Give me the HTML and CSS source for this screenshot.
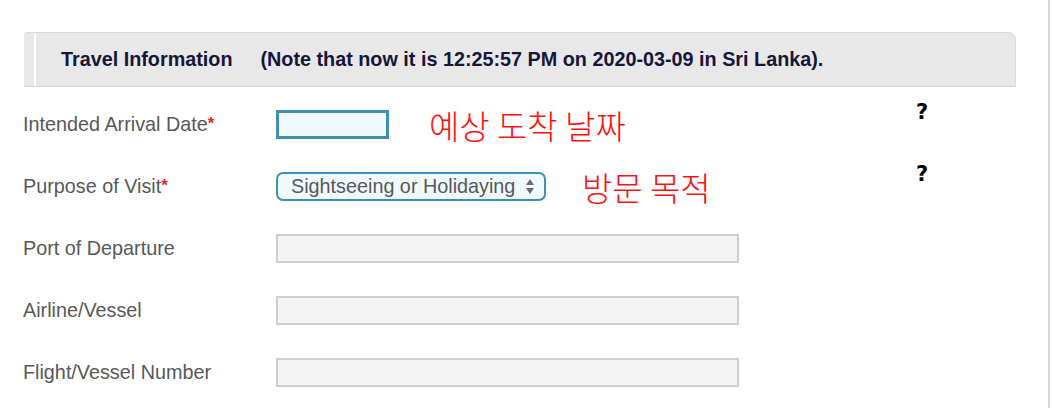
FILE: index.html
```html
<!DOCTYPE html>
<html lang="en">
<head>
    <meta charset="UTF-8">
    <meta name="viewport" content="width=device-width, initial-scale=1.0">
    <title>Travel Information</title>
    <link rel="stylesheet" href="styles.css">
</head>
<body>

<div class="page">
    <div class="section-head">
        <div class="section-title">
            <span>Travel Information</span>
            <span class="note">(Note that now it is 12:25:57 PM on 2020-03-09 in Sri Lanka).</span>
        </div>
    </div>

    <div class="row">
        <label for="arrival">Intended Arrival Date<span class="req">*</span></label>
        <div class="field">
            <input type="text" id="arrival" class="date-input">
            <span class="hint">예상 도착 날짜</span>
        </div>
        <span class="help">?</span>
    </div>

    <div class="row">
        <label for="purpose">Purpose of Visit<span class="req">*</span></label>
        <div class="field">
            <div class="select-wrap">
                <select id="purpose">
                    <option>Sightseeing or Holidaying</option>
                </select>
                <svg class="arrows" width="8" height="15" viewBox="0 0 8 15">
                    <path d="M4 0 L8 6 L0 6 Z" fill="#6b6b6b"/>
                    <path d="M0 9 L8 9 L4 15 Z" fill="#6b6b6b"/>
                </svg>
            </div>
            <span class="hint hint-2">방문 목적</span>
        </div>
        <span class="help">?</span>
    </div>

    <div class="row">
        <label for="port">Port of Departure</label>
        <div class="field">
            <input type="text" id="port" class="plain-input">
        </div>
    </div>

    <div class="row">
        <label for="airline">Airline/Vessel</label>
        <div class="field">
            <input type="text" id="airline" class="plain-input">
        </div>
    </div>

    <div class="row">
        <label for="flight">Flight/Vessel Number</label>
        <div class="field">
            <input type="text" id="flight" class="plain-input">
        </div>
    </div>
</div>

</body>
</html>
```

FILE: styles.css
```css
body {
    margin: 0;
    background-color: #fff;
    font-family: Arial, "Liberation Sans", sans-serif;
}

.page {
    width: 1050px;
    height: 408px;
    border-right: 2px solid #d6d6d6;
    padding-top: 32px;
    box-sizing: border-box;
    overflow: hidden;
}

.section-head {
    margin-left: 24px;
    width: 992px;
    box-sizing: border-box;
    padding-left: 10px;
    background-color: #e8e8e8;
    border-top: 1px solid #dadada;
    border-bottom: 1px solid #d2d2d2;
    border-right: 1px solid #dcdcdc;
    border-radius: 3px 7px 0 0;
}

.section-title {
    border-left: 2px solid #fff;
    height: 53px;
    display: flex;
    align-items: center;
    padding-left: 25px;
    font-size: 19.8px;
    font-weight: bold;
    color: #161638;
}

.note {
    margin-left: 28px;
}

.row {
    display: grid;
    grid-template-columns: 253px 640px auto;
    height: 62px;
    align-items: center;
    padding-left: 23px;
}

.section-head + .row {
    margin-top: 6px;
}

label {
    font-size: 19.8px;
    color: #585858;
    padding-top: 1px;
}

.req {
    color: #e8261e;
    font-weight: bold;
    font-size: 17px;
    vertical-align: 2px;
}

.field {
    display: flex;
    align-items: center;
}

.date-input {
    width: 113px;
    height: 29px;
    box-sizing: border-box;
    border: 3px solid #3d8fb3;
    background-color: #f0f9fe;
    margin: 0;
}

.select-wrap {
    position: relative;
}

select {
    appearance: none;
    -webkit-appearance: none;
    width: 270px;
    height: 29px;
    box-sizing: border-box;
    border: 2px solid #3d8fb3;
    border-radius: 7px;
    background-color: #f0f9fe;
    padding-left: 13px;
    font-family: Arial, "Liberation Sans", sans-serif;
    font-size: 19.8px;
    color: #585858;
    margin: 0;
}

.arrows {
    position: absolute;
    left: 250px;
    top: 7px;
    pointer-events: none;
}

.hint {
    margin-left: 40px;
    font-family: "Noto Sans CJK KR", sans-serif;
    font-weight: 300;
    font-size: 33px;
    color: #ff1010;
    line-height: 1;
    margin-top: 2px;
}

.hint-2 {
    margin-left: 36px;
}

.help {
    align-self: start;
    margin-top: 9px;
    font-family: "DejaVu Sans", sans-serif;
    font-weight: bold;
    font-size: 21px;
    color: #000;
    line-height: 1;
}

.plain-input {
    width: 463px;
    height: 29px;
    box-sizing: border-box;
    border: 2px solid #cfcfcf;
    background-color: #f4f4f4;
    margin: 0;
}
```
